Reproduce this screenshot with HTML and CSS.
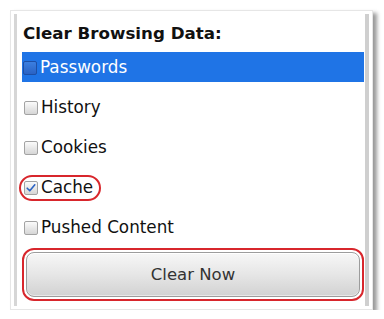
FILE: index.html
```html
<!doctype html>
<html>
<head>
<title>Clear Browsing Data</title>
    <link rel="stylesheet" href="styles.css">
</head>
<body>
<div class="shot-frame">
    <div class="shot-screen">
        <h2 class="clear-title">Clear Browsing Data:</h2>
        <ul class="clear-list">
            <li class="clear-item clear-item-focus"><i class="check-box"></i><span class="check-txt">Passwords</span></li>
            <li class="clear-item"><i class="check-box"></i><span class="check-txt">History</span></li>
            <li class="clear-item"><i class="check-box"></i><span class="check-txt">Cookies</span></li>
            <li class="clear-item">
                <span class="mark-box"><i class="check-box check-box-on">
                    <svg width="12" height="12" viewBox="0 0 12 12"><path d="M2.2 6.2 L4.8 8.8 L9.8 2.8" fill="none" stroke="#2b63c4" stroke-width="1.6" stroke-linecap="round" stroke-linejoin="round"/></svg>
                </i><span class="check-txt">Cache</span></span>
            </li>
            <li class="clear-item"><i class="check-box"></i><span class="check-txt">Pushed Content</span></li>
        </ul>
        <div class="mark-btn">
            <button class="clear-btn" type="button">Clear Now</button>
        </div>
    </div>
</div>
</body>
</html>
```

FILE: styles.css
```css
html{background:#fff;}
body,div,ul,li,h2{margin:0;padding:0;}
body{font:16.8px/1.2 "DejaVu Sans","Liberation Sans",sans-serif;color:#111;}
ul,li{list-style:none;}
.shot-frame{margin:10px 0 0 10px;width:355px;height:292px;padding:3px;background:#fff;border:1px solid #e6e6e6;box-shadow:4px 3px 4px rgba(0,0,0,0.4);}
.shot-screen{height:100%;box-sizing:border-box;border-left:3px solid #d6d6d6;border-right:4px solid #cfcfcf;padding:0 1px 0 5px;}
.clear-title{font-size:16.7px;font-weight:700;height:38px;line-height:39px;padding:0 0 0 1px;color:#111;}
.clear-item{height:30px;margin:0 0 10px 0;display:flex;align-items:center;padding:1px 0 0 2px;box-sizing:border-box;}
.clear-item-focus{background:#1f74e6;color:#fff;padding-left:1px;}
.check-box{width:12px;height:12px;border:1px solid #a3a3a3;border-radius:2px;background:linear-gradient(#fbfbfb,#d6d6d6);display:inline-block;margin:0 3px 0 0;flex:none;}
.clear-item-focus .check-box{background:linear-gradient(#3b7fe0,#2a62c4);border-color:#1d4fa6;}
.check-box-on svg{display:block;}
.check-txt{white-space:nowrap;}
.mark-box{display:inline-flex;align-items:center;height:22px;border:2px solid #d8262c;border-radius:13px;padding:0 6px 0 3px;margin-left:-5px;}
.mark-btn{margin:-4px 0 0 0;border:2px solid #d8262c;border-radius:12px;padding:2px;height:45px;box-sizing:content-box;width:334px;}
.clear-btn{display:block;width:100%;height:100%;border:1px solid #9c9c9c;border-radius:8px;background:linear-gradient(#f7f7f7,#e6e6e6 50%,#d2d2d2);box-shadow:inset 0 1px 0 #fff,inset 0 -1px 0 #e8e8e8;font:16.5px "DejaVu Sans","Liberation Sans",sans-serif;color:#333;cursor:pointer;}
```
